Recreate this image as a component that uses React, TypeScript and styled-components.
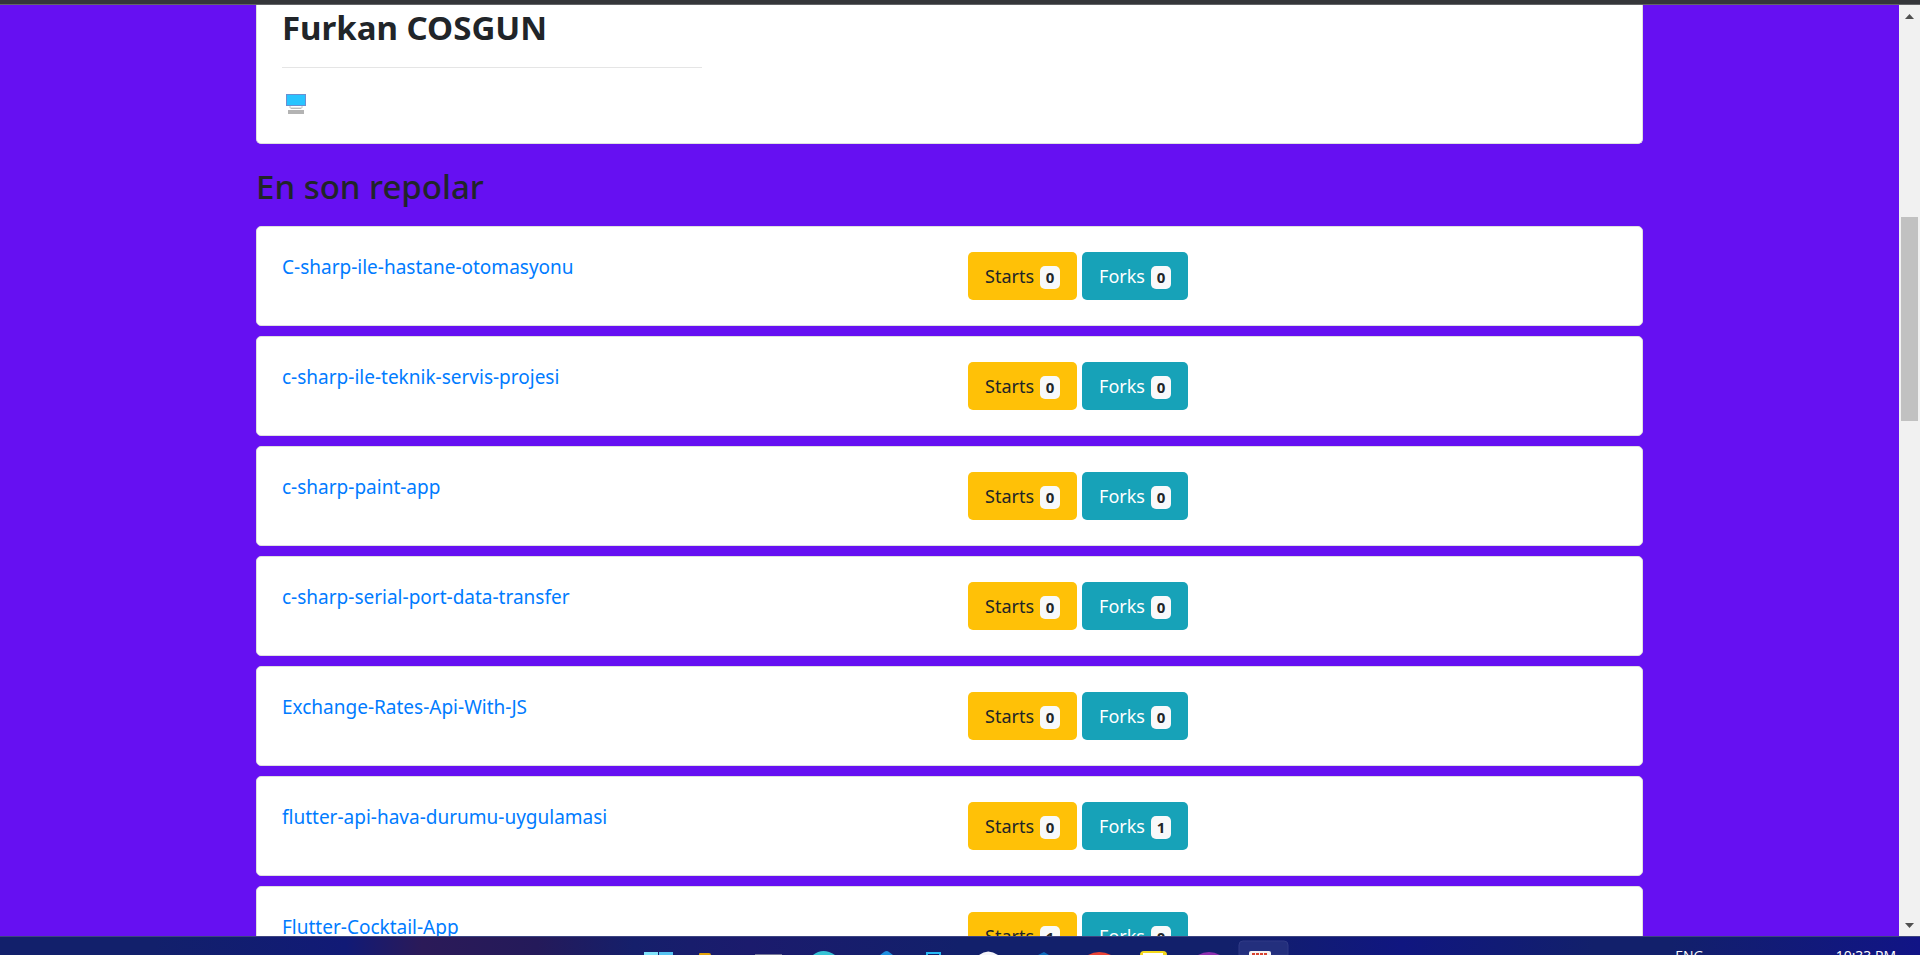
import React from "react";
import styled, { createGlobalStyle } from "styled-components";

const Global = createGlobalStyle`
  * { box-sizing: border-box; }
  body {
    margin: 0;
    background: #6610f2;
    color: #212529;
    font-family: "Noto Sans", "Open Sans", sans-serif;
    font-size: 19px;
    line-height: 30px;
    overflow: hidden;
  }
`;

const Screen = styled.div`
  display: flex;
  flex-direction: column;
  height: 100vh;
`;

const WindowEdge = styled.div`
  flex: none;
  height: 5px;
  background: #35363a;
  border-bottom: 1px solid #636467;
`;

const Viewport = styled.div`
  flex: 1;
  min-height: 0;
  display: flex;
`;

const Page = styled.main`
  flex: 1;
  min-width: 0;
  overflow: hidden;
`;

const Container = styled.div`
  max-width: 1387px;
  margin: 0 auto;
`;

const Card = styled.section`
  padding: 25px;
  margin-bottom: 10px;
  background: #fff;
  border: 1px solid #dfdfdf;
  border-radius: 5px;
`;

const ProfileCard = styled(Card)`
  padding-top: 2px;
  margin-bottom: 22px;
  border-top: 0;
  border-radius: 0 0 5px 5px;
`;

const Columns = styled.div<{ $count: number }>`
  display: grid;
  grid-template-columns: repeat(${(p) => p.$count}, minmax(0, 1fr));
  column-gap: 37px;
`;

const Name = styled.h2`
  margin: 0;
  font-size: 33px;
  font-weight: 700;
  line-height: 42px;
`;

const Divider = styled.hr`
  margin: 18px 0 20px;
  border: 0;
  border-top: 1px solid #e5e5e5;
`;

const Bio = styled.p`
  margin: 0;
  height: 30px;
  display: flex;
  align-items: center;
  padding: 2px 0 0 4px;
`;

const Heading = styled.h2`
  margin: 0 0 18px;
  font-size: 33px;
  font-weight: 500;
  line-height: 42px;
`;

const RepoLink = styled.a`
  color: #007bff;
  text-decoration: none;
`;

const Actions = styled.div`
  display: flex;
  gap: 5px;
`;

const CountButton = styled.button<{ $tone: "warning" | "info" }>`
  display: flex;
  align-items: center;
  gap: 6px;
  height: 48px;
  padding: 0 17px;
  border: 0;
  border-radius: 5px;
  background: ${(p) => (p.$tone === "warning" ? "#ffc107" : "#17a2b8")};
  color: ${(p) => (p.$tone === "warning" ? "#212529" : "#fff")};
  font: inherit;
  font-size: 18px;
`;

const Badge = styled.span`
  width: 20px;
  height: 23px;
  margin-top: 3px;
  border-radius: 5px;
  background: #f8f9fa;
  color: #212529;
  font-size: 15px;
  font-weight: 700;
  line-height: 23px;
  text-align: center;
`;

const ScrollTrack = styled.div`
  flex: none;
  display: flex;
  flex-direction: column;
  width: 21px;
  padding: 0 2px;
  background: #f1f1f1;
`;

const ScrollArrow = styled.svg`
  display: block;
  flex: none;
  width: 17px;
  height: 21px;
  fill: #505050;
`;

const ScrollSpace = styled.div<{ $grow: number }>`
  flex: ${(p) => p.$grow} 1 0;
`;

const ScrollThumb = styled(ScrollSpace)`
  background: #c1c1c1;
`;

const Taskbar = styled.footer`
  flex: none;
  display: grid;
  grid-template-columns: 1fr auto 1fr;
  height: 19px;
  overflow: hidden;
  border-top: 1px solid #3d4380;
  background: linear-gradient(
    90deg, #12206b 0%, #12206b 8%, #111a76 18%, #2b1a58 22%, #241a5a 28%, #151f6b 33%,
    #1b1b6d 39%, #12206b 50%, #12206b 64%, #101680 73%, #12206b 83%, #12206b 87%, #111486 100%
  );
`;

const TaskIcons = styled.div`
  grid-column: 2;
  display: flex;
`;

const TaskIcon = styled.svg`
  display: block;
  width: 55px;
  height: 18px;
`;

const Tray = styled.div`
  display: flex;
  justify-content: flex-end;
  gap: 132px;
  padding: 9px 24px 0 0;
  color: #fff;
  font-family: "Open Sans", sans-serif;
  font-size: 14px;
  line-height: 20px;
`;

const repos = [
  { name: "C-sharp-ile-hastane-otomasyonu", stars: 0, forks: 0 },
  { name: "c-sharp-ile-teknik-servis-projesi", stars: 0, forks: 0 },
  { name: "c-sharp-paint-app", stars: 0, forks: 0 },
  { name: "c-sharp-serial-port-data-transfer", stars: 0, forks: 0 },
  { name: "Exchange-Rates-Api-With-JS", stars: 0, forks: 0 },
  { name: "flutter-api-hava-durumu-uygulamasi", stars: 0, forks: 1 },
  { name: "Flutter-Cocktail-App", stars: 1, forks: 0 },
];

const taskIcons = [
  <><path d="M14 15h14v3H14z" fill="#7fe3fb" /><path d="M29 15h14v3H29z" fill="#55c3f2" /></>,
  <path d="M14 18v-1q0-1 1-1h9q2 0 2 2z" fill="#e2a20a" />,
  <path d="M15 17h27v1H15z" fill="#77799a" />,
  <path d="M18 18Q28 10 40 18z" fill="#35c3d6" />,
  <path d="M30 18l4-3q3-2 5 0l4 3z" fill="#1d8fe0" />,
  <path d="M22 18v-2h13v2" fill="none" stroke="#25b9f5" strokeWidth="2" />,
  <path d="M19 18Q28 11 38 18z" fill="#f5f5fa" />,
  <path d="M23 18l6-3 5 3z" fill="#0f6cbd" />,
  <path d="M18 18Q29 12 41 18z" fill="#ea4335" />,
  <><path d="M15 18q0-4 4-4h19q4 0 4 4z" fill="#f3d81c" /><path d="M18 16h20v2H18z" fill="#fff" /></>,
  <path d="M18 18Q29 12 40 18z" fill="#8e2fb0" />,
  <><path d="M4 18V8q0-4 4-4h41q4 0 4 4v10z" fill="#232f7d" stroke="#303b86" /><path d="M14 18v-2q0-2 2-2h18q2 0 2 2v2z" fill="#f5f3f4" /><path d="M17 17h15" stroke="#d9432f" strokeWidth="2" strokeDasharray="3 1" /></>,
];

export default function App() {
  return (
    <>
      <Global />
      <Screen>
        <WindowEdge />
        <Viewport>
          <Page>
            <Container>
              <ProfileCard>
                <Columns $count={3}>
                  <div>
                    <Name>Furkan COSGUN</Name>
                    <Divider />
                    <Bio>
                      <svg width="20" height="20" viewBox="0 0 20 20" role="img" aria-label="Computer">
                        <path d="M0 0h20v12H0z" fill="#6c8fd0" />
                        <path d="M1 1h18v10H1z" fill="#28c4ff" />
                        <path d="M4 12v2h12v-2" fill="#fff" stroke="#c6c6c6" />
                        <path d="M5 14h10v1H5z" fill="#bbb" />
                        <path d="M2 16h16v4H2z" fill="#b3b3b3" />
                      </svg>
                    </Bio>
                  </div>
                </Columns>
              </ProfileCard>
              <Heading>En son repolar</Heading>
              {repos.map((repo) => (
                <Card key={repo.name}>
                  <Columns $count={2}>
                    <div>
                      <RepoLink href="#">{repo.name}</RepoLink>
                    </div>
                    <Actions>
                      <CountButton type="button" $tone="warning">
                        Starts <Badge>{repo.stars}</Badge>
                      </CountButton>
                      <CountButton type="button" $tone="info">
                        Forks <Badge>{repo.forks}</Badge>
                      </CountButton>
                    </Actions>
                  </Columns>
                </Card>
              ))}
            </Container>
          </Page>
          <ScrollTrack aria-hidden="true">
            <ScrollArrow viewBox="0 0 17 21">
              <path d="M4 14l4.500-5 4.500 5z" />
            </ScrollArrow>
            <ScrollSpace $grow={191} />
            <ScrollThumb $grow={204} />
            <ScrollSpace $grow={494} />
            <ScrollArrow viewBox="0 0 17 21">
              <path d="M4 8l4.500 5L13 8z" />
            </ScrollArrow>
          </ScrollTrack>
        </Viewport>
        <Taskbar>
          <TaskIcons>
            {taskIcons.map((shape, index) => (
              <TaskIcon key={index} viewBox="0 0 55 18" aria-hidden="true">
                {shape}
              </TaskIcon>
            ))}
          </TaskIcons>
          <Tray>
            <span>ENG</span>
            <span>10:33 PM</span>
          </Tray>
        </Taskbar>
      </Screen>
    </>
  );
}
